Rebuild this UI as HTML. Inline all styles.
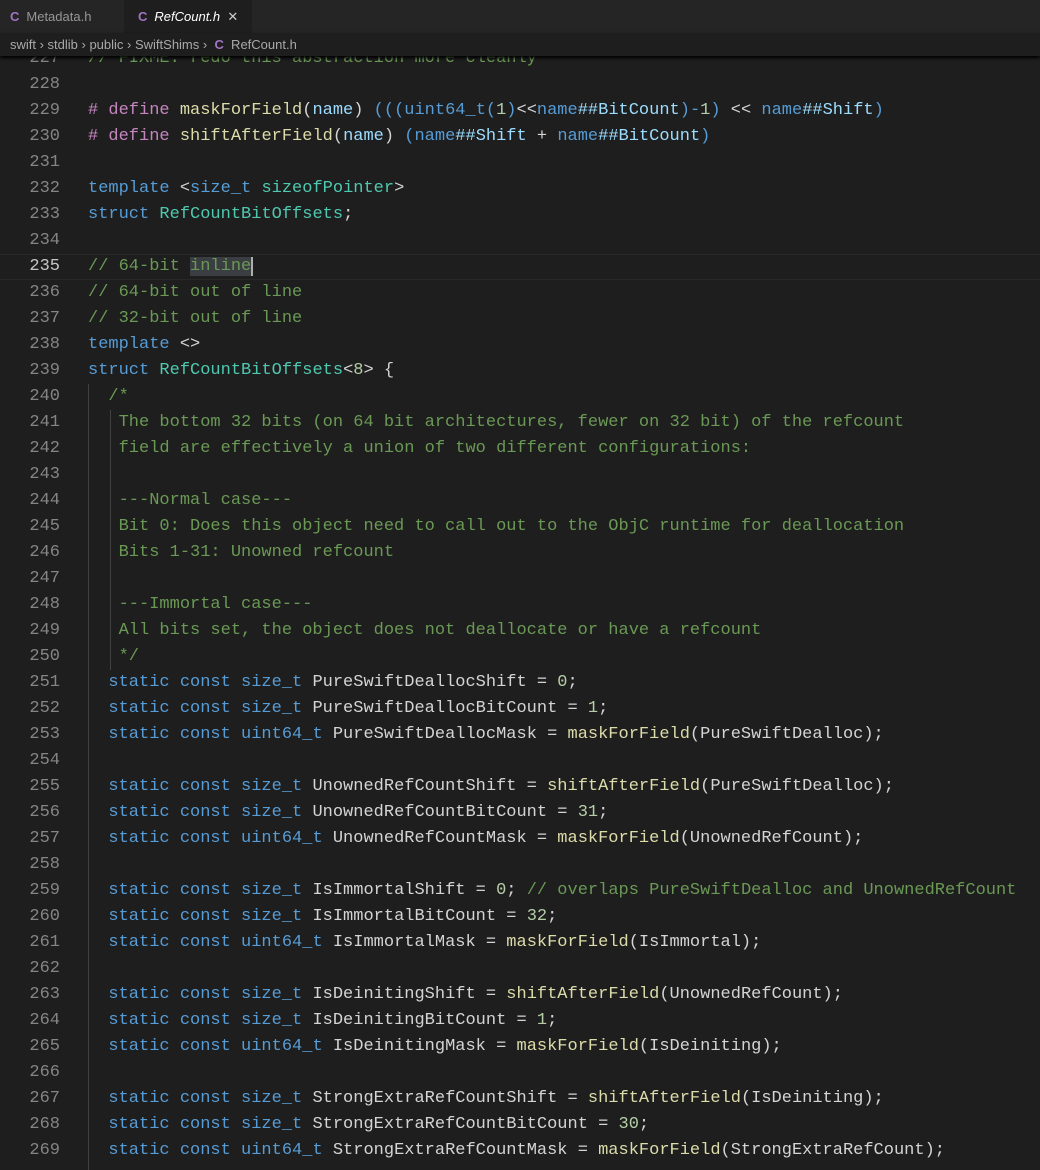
<!DOCTYPE html>
<html><head><meta charset="utf-8"><style>
body{margin:0;width:1040px;height:1168px;background:#1e1e1e;overflow:hidden;font-family:"Liberation Sans",sans-serif;position:relative}
.tabs{position:absolute;top:0;left:0;width:1040px;height:33px;background:#252526}
.tab{position:absolute;top:0;height:33px;font-size:13px;line-height:33px;color:#969696}
.tab .ic{color:#a074c4;font-weight:bold;margin-right:7px}
.crumb{position:absolute;top:33px;left:0;width:1040px;height:23px;background:#1e1e1e;color:#a9a9a9;font-size:13px;line-height:23px;z-index:5;box-shadow:0 2px 3px #000}
.crumb span{padding-left:10px}
.code{position:absolute;top:46px;left:0;width:1040px;font-family:"Liberation Mono",monospace;font-size:17px}
.l{height:26px;line-height:26px;white-space:pre;position:relative;color:#d4d4d4}
.ln{position:absolute;left:0;width:60px;text-align:right;color:#858585}
.tx{position:absolute;left:88px}
.k{color:#569cd6}.t{color:#4ec9b0}.f{color:#dcdcaa}.c{color:#6a9955}.n{color:#b5cea8}.v{color:#9cdcfe}.m{color:#c586c0}
.cur{box-shadow:inset 0 1px #282828,inset 0 -1px #282828}
.cur .ln{color:#c6c6c6}
.g1{position:absolute;left:88px;top:384px;width:1px;height:786px;background:#404040}
.g2{position:absolute;left:110px;top:410px;width:1px;height:260px;background:#404040}
</style></head><body>
<div class="tabs">
<div class="tab" style="left:0;width:124px"><span style="padding-left:10px" class="ic">C</span>Metadata.h</div>
<div class="tab" style="left:124px;width:128px;background:#1e1e1e;color:#fff;font-style:italic"><span style="padding-left:14px;font-style:normal" class="ic">C</span>RefCount.h&nbsp;&nbsp;<span style="font-style:normal;color:#ccc">✕</span></div>
</div>
<div class="crumb"><span>swift ›&nbsp;stdlib ›&nbsp;public ›&nbsp;SwiftShims ›&nbsp;&nbsp;<b style="color:#a074c4">C</b>&nbsp; RefCount.h</span></div>
<div class="g1"></div><div class="g2"></div>
<div class="code">
<div class="l"><span class="ln">227</span><span class="tx c">// FIXME: redo this abstraction more cleanly</span></div>
<div class="l"><span class="ln">228</span></div>
<div class="l"><span class="ln">229</span><span class="tx"><span class="m"># define</span> <span class="f">maskForField</span>(<span class="v">name</span>) <span class="k">(((uint64_t(</span><span class="n">1</span><span class="k">)</span>&lt;&lt;<span class="k">name</span><span class="v">##BitCount</span><span class="k">)-</span><span class="n">1</span><span class="k">)</span> &lt;&lt; <span class="k">name</span><span class="v">##Shift</span><span class="k">)</span></span></div>
<div class="l"><span class="ln">230</span><span class="tx"><span class="m"># define</span> <span class="f">shiftAfterField</span>(<span class="v">name</span>) <span class="k">(name</span><span class="v">##Shift</span> + <span class="k">name</span><span class="v">##BitCount</span><span class="k">)</span></span></div>
<div class="l"><span class="ln">231</span></div>
<div class="l"><span class="ln">232</span><span class="tx"><span class="k">template</span> &lt;<span class="k">size_t</span> <span class="t">sizeofPointer</span>&gt;</span></div>
<div class="l"><span class="ln">233</span><span class="tx"><span class="k">struct</span> <span class="t">RefCountBitOffsets</span>;</span></div>
<div class="l"><span class="ln">234</span></div>
<div class="l cur"><span class="ln">235</span><span class="tx c">// 64-bit <span style="background:#3a3d41">inline</span><span style="border-left:2px solid #aeafad"></span></span></div>
<div class="l"><span class="ln">236</span><span class="tx c">// 64-bit out of line</span></div>
<div class="l"><span class="ln">237</span><span class="tx c">// 32-bit out of line</span></div>
<div class="l"><span class="ln">238</span><span class="tx"><span class="k">template</span> &lt;&gt;</span></div>
<div class="l"><span class="ln">239</span><span class="tx"><span class="k">struct</span> <span class="t">RefCountBitOffsets</span>&lt;<span class="n">8</span>&gt; {</span></div>
<div class="l"><span class="ln">240</span><span class="tx c">  /*</span></div>
<div class="l"><span class="ln">241</span><span class="tx c">   The bottom 32 bits (on 64 bit architectures, fewer on 32 bit) of the refcount</span></div>
<div class="l"><span class="ln">242</span><span class="tx c">   field are effectively a union of two different configurations:</span></div>
<div class="l"><span class="ln">243</span></div>
<div class="l"><span class="ln">244</span><span class="tx c">   ---Normal case---</span></div>
<div class="l"><span class="ln">245</span><span class="tx c">   Bit 0: Does this object need to call out to the ObjC runtime for deallocation</span></div>
<div class="l"><span class="ln">246</span><span class="tx c">   Bits 1-31: Unowned refcount</span></div>
<div class="l"><span class="ln">247</span></div>
<div class="l"><span class="ln">248</span><span class="tx c">   ---Immortal case---</span></div>
<div class="l"><span class="ln">249</span><span class="tx c">   All bits set, the object does not deallocate or have a refcount</span></div>
<div class="l"><span class="ln">250</span><span class="tx c">   */</span></div>
<div class="l"><span class="ln">251</span><span class="tx">  <span class="k">static const size_t</span> PureSwiftDeallocShift = <span class="n">0</span>;</span></div>
<div class="l"><span class="ln">252</span><span class="tx">  <span class="k">static const size_t</span> PureSwiftDeallocBitCount = <span class="n">1</span>;</span></div>
<div class="l"><span class="ln">253</span><span class="tx">  <span class="k">static const uint64_t</span> PureSwiftDeallocMask = <span class="f">maskForField</span>(PureSwiftDealloc);</span></div>
<div class="l"><span class="ln">254</span></div>
<div class="l"><span class="ln">255</span><span class="tx">  <span class="k">static const size_t</span> UnownedRefCountShift = <span class="f">shiftAfterField</span>(PureSwiftDealloc);</span></div>
<div class="l"><span class="ln">256</span><span class="tx">  <span class="k">static const size_t</span> UnownedRefCountBitCount = <span class="n">31</span>;</span></div>
<div class="l"><span class="ln">257</span><span class="tx">  <span class="k">static const uint64_t</span> UnownedRefCountMask = <span class="f">maskForField</span>(UnownedRefCount);</span></div>
<div class="l"><span class="ln">258</span></div>
<div class="l"><span class="ln">259</span><span class="tx">  <span class="k">static const size_t</span> IsImmortalShift = <span class="n">0</span>; <span class="c">// overlaps PureSwiftDealloc and UnownedRefCount</span></span></div>
<div class="l"><span class="ln">260</span><span class="tx">  <span class="k">static const size_t</span> IsImmortalBitCount = <span class="n">32</span>;</span></div>
<div class="l"><span class="ln">261</span><span class="tx">  <span class="k">static const uint64_t</span> IsImmortalMask = <span class="f">maskForField</span>(IsImmortal);</span></div>
<div class="l"><span class="ln">262</span></div>
<div class="l"><span class="ln">263</span><span class="tx">  <span class="k">static const size_t</span> IsDeinitingShift = <span class="f">shiftAfterField</span>(UnownedRefCount);</span></div>
<div class="l"><span class="ln">264</span><span class="tx">  <span class="k">static const size_t</span> IsDeinitingBitCount = <span class="n">1</span>;</span></div>
<div class="l"><span class="ln">265</span><span class="tx">  <span class="k">static const uint64_t</span> IsDeinitingMask = <span class="f">maskForField</span>(IsDeiniting);</span></div>
<div class="l"><span class="ln">266</span></div>
<div class="l"><span class="ln">267</span><span class="tx">  <span class="k">static const size_t</span> StrongExtraRefCountShift = <span class="f">shiftAfterField</span>(IsDeiniting);</span></div>
<div class="l"><span class="ln">268</span><span class="tx">  <span class="k">static const size_t</span> StrongExtraRefCountBitCount = <span class="n">30</span>;</span></div>
<div class="l"><span class="ln">269</span><span class="tx">  <span class="k">static const uint64_t</span> StrongExtraRefCountMask = <span class="f">maskForField</span>(StrongExtraRefCount);</span></div>
</div>
</body></html>
